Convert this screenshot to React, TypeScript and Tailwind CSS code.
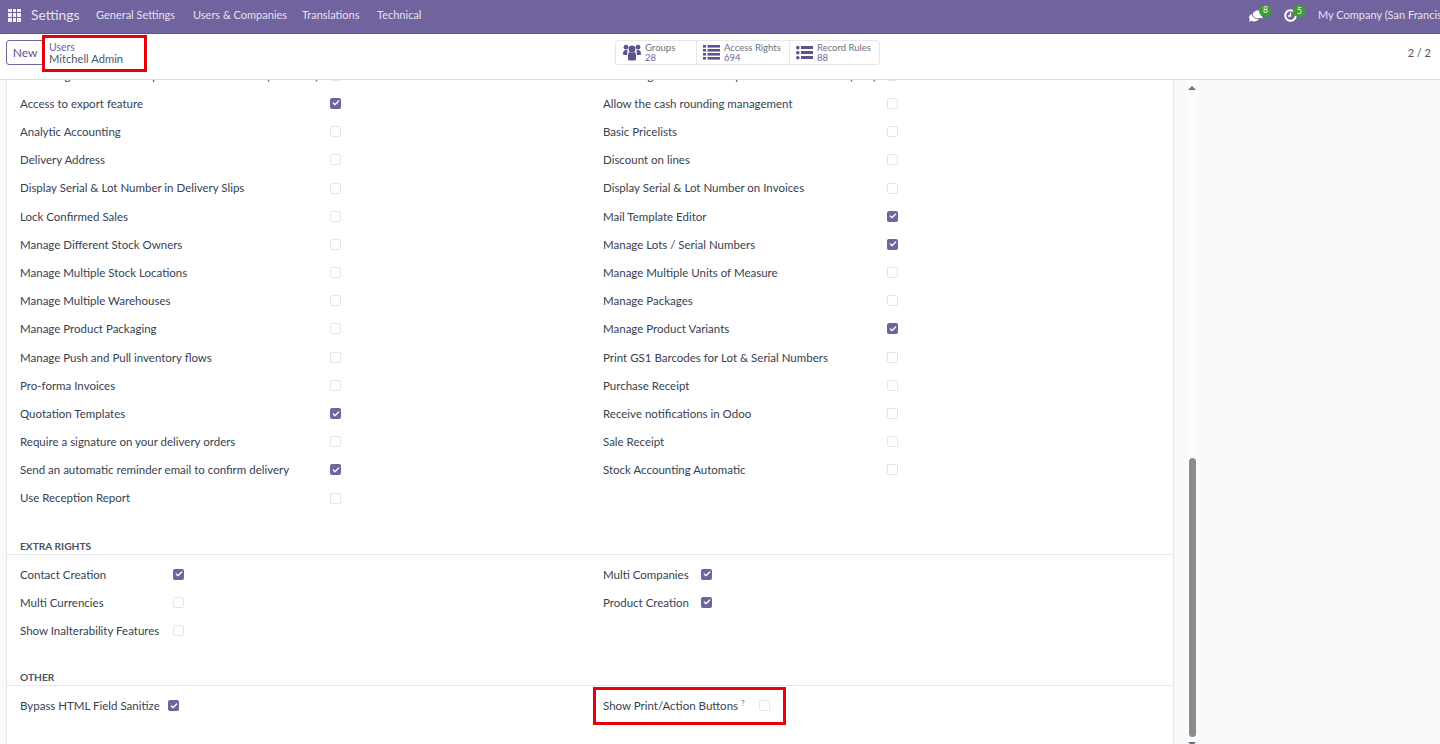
import React from "react";
import { Check } from "lucide-react";
import { FaComments } from "react-icons/fa";

type R = [string, boolean];

const leftRows: R[] = [
  ["A warning can be set on a product or a customer (Purchase)", false],
  ["Access to export feature", true],
  ["Analytic Accounting", false],
  ["Delivery Address", false],
  ["Display Serial & Lot Number in Delivery Slips", false],
  ["Lock Confirmed Sales", false],
  ["Manage Different Stock Owners", false],
  ["Manage Multiple Stock Locations", false],
  ["Manage Multiple Warehouses", false],
  ["Manage Product Packaging", false],
  ["Manage Push and Pull inventory flows", false],
  ["Pro-forma Invoices", false],
  ["Quotation Templates", true],
  ["Require a signature on your delivery orders", false],
  ["Send an automatic reminder email to confirm delivery", true],
  ["Use Reception Report", false],
];
const rightRows: R[] = [
  ["A warning can be set on a product or a customer (Sale)", false],
  ["Allow the cash rounding management", false],
  ["Basic Pricelists", false],
  ["Discount on lines", false],
  ["Display Serial & Lot Number on Invoices", false],
  ["Mail Template Editor", true],
  ["Manage Lots / Serial Numbers", true],
  ["Manage Multiple Units of Measure", false],
  ["Manage Packages", false],
  ["Manage Product Variants", true],
  ["Print GS1 Barcodes for Lot & Serial Numbers", false],
  ["Purchase Receipt", false],
  ["Receive notifications in Odoo", false],
  ["Sale Receipt", false],
  ["Stock Accounting Automatic", false],
];

function Box({ on }: { on: boolean }) {
  return on ? (
    <span className="flex h-[11px] w-[11px] shrink-0 items-center justify-center rounded-[2px] bg-[#71639e]">
      <Check size={8} strokeWidth={4} color="#ffffff" />
    </span>
  ) : (
    <span className="h-[11px] w-[11px] shrink-0 rounded-[2px] border border-[#e3e5e8] bg-white" />
  );
}

function Row({ label, on, w, help }: { label: string; on: boolean; w: string; help?: boolean }) {
  return (
    <div className="flex h-[28.2px] items-center">
      <div className={`${w} shrink-0 whitespace-nowrap text-[#374151]`}>
        {label}
        {help && <sup className="ml-[3px] text-[8px] text-[#71639e]">?</sup>}
      </div>
      <Box on={on} />
    </div>
  );
}

function Column({ rows, w }: { rows: R[]; w: string }) {
  return (
    <div className="flex flex-col">
      {rows.map(([l, o]) => (
        <Row key={l} label={l} on={o} w={w} />
      ))}
    </div>
  );
}

function Heading({ children }: { children: React.ReactNode }) {
  return (
    <div className="border-b border-[#e5e7eb] pb-[1px] pl-[13px] text-[10.2px] font-bold uppercase leading-[14px] text-[#4b5563]">
      {children}
    </div>
  );
}

function Stat({ icon, label, value, w, gap }: { icon: React.ReactNode; label: string; value: string; w: string; gap: string }) {
  return (
    <div className={`${w} ${gap} flex h-full items-center border-r border-[#e5e7eb] last:border-r-0`}>
      {icon}
      <div className="mt-[1px] flex flex-col text-[9.500px] leading-[10px]">
        <span className="text-[#6b7280]">{label}</span>
        <span className="text-[#71639e]">{value}</span>
      </div>
    </div>
  );
}

const AccessIcon = () => (
  <svg width="17" height="15" viewBox="0 0 17 15" fill="#5f5290" className="shrink-0">
    {[0, 4, 8, 12].map((y) => (
      <g key={y}>
        <rect x="0" y={y} width="3" height="2.600" />
        <rect x="4.500" y={y} width="12.500" height="2.600" />
      </g>
    ))}
  </svg>
);

const RulesIcon = () => (
  <svg width="17" height="14" viewBox="0 0 17 14" fill="#5f5290" className="shrink-0">
    {[0, 5, 10].map((y) => (
      <g key={y}>
        <circle cx="1.800" cy={y + 1.700} r="1.800" />
        <rect x="5" y={y} width="12" height="3" />
      </g>
    ))}
  </svg>
);

const GroupIcon = () => (
  <svg width="18" height="17" viewBox="0 0 18 17" fill="#5f5290" className="shrink-0">
    <circle cx="3" cy="3.200" r="2.400" />
    <circle cx="15" cy="3.200" r="2.400" />
    <circle cx="9" cy="5" r="3.400" />
    <path d="M0 10c0-3 1.200-4 3-4 .8 0 1.200.2 1.600.6C4.400 8 4 9.400 4 11H1c-.6 0-1-.4-1-1zM18 10c0-3-1.200-4-3-4-.8 0-1.200.2-1.600.6.2 1.400.6 2.800.6 4.400h3c.6 0 1-.4 1-1z" />
    <path d="M5 11c0-2 1-3 2-3 .6.4 1.200.6 2 .6s1.400-.2 2-.6c1 0 2 1 2 3v4c0 1-.8 1.500-1.600 1.500H6.600C5.800 16.500 5 16 5 15z" />
  </svg>
);

const ClockIcon = () => (
  <svg width="13" height="13" viewBox="0 0 13 13" fill="none" stroke="#ffffff" strokeWidth="2">
    <circle cx="6.500" cy="6.500" r="5.300" />
    <path d="M6.500 3.500v3.500H4" strokeWidth="1.400" />
  </svg>
);

function AppsIcon() {
  return (
    <div className="grid h-[13px] w-[13px] grid-cols-3 gap-[1px]">
      {Array.from({ length: 9 }).map((_, i) => (
        <span key={i} className="bg-white/90" />
      ))}
    </div>
  );
}

function Badge({ n }: { n: string }) {
  return (
    <span className="absolute -right-[9px] -top-[4px] flex h-[12px] w-[13px] items-center justify-center rounded-full bg-[#3f9c35] text-[8.500px] text-white/90">
      {n}
    </span>
  );
}

export default function App() {
  return (
    <div className="relative flex h-[744px] w-[1440px] flex-col overflow-hidden bg-white font-['Lato',sans-serif] text-[11.500px]">
      <header className="flex h-[34px] shrink-0 items-center border-b border-[#5f5290] bg-[#71639e] pb-[3px] pl-[8px] text-[#e4e0ee]">
        <AppsIcon />
        <span className="ml-[10px] w-[48px] whitespace-nowrap text-[13.800px]">Settings</span>
        <nav className="ml-[17px] flex text-[11px]">
          <span className="w-[97px]">General Settings</span>
          <span className="w-[109px]">Users &amp; Companies</span>
          <span className="w-[75px]">Translations</span>
          <span>Technical</span>
        </nav>
        <div className="ml-auto flex items-center whitespace-nowrap text-[11px]">
          <span className="relative mr-[21px] mt-[1px] flex">
            <FaComments size={14} color="#ffffff" className="scale-x-[-1]" />
            <Badge n="8" />
          </span>
          <span className="relative mr-[21px] mt-[1px] flex">
            <ClockIcon />
            <Badge n="5" />
          </span>
          <span className="w-[122px] overflow-hidden">My Company (San Francisco)</span>
        </div>
      </header>

      <div className="z-10 flex h-[46px] shrink-0 items-start border-b border-[#d8dadd] bg-white pl-[6px] pr-[9px] pt-[6px]">
        <button className="h-[25px] w-[38px] rounded-[3px] border border-[#71639e] text-[12px] text-[#5f5290]">New</button>
        <div className="ml-[5px] mt-[1px] flex w-[101px] flex-col">
          <span className="text-[10.500px] leading-[12px] text-[#71639e]">Users</span>
          <span className="text-[11.200px] leading-[12px] text-[#4b5563]">Mitchell Admin</span>
        </div>
        <div className="ml-[465px] flex h-[25px] items-center rounded-[3px] border border-[#e5e7eb]">
          <Stat icon={<GroupIcon />} label="Groups" value="28" w="w-[81px]" gap="gap-[4px] pl-[7px]" />
          <Stat icon={<AccessIcon />} label="Access Rights" value="694" w="w-[93px]" gap="gap-[4px] pl-[6px]" />
          <Stat icon={<RulesIcon />} label="Record Rules" value="88" w="w-[89px]" gap="gap-[4px] pl-[6px]" />
        </div>
        <span className="ml-auto mt-[5px] text-[11px] text-[#4b5563]">2 / 2</span>
      </div>

      <main className="flex min-h-0 flex-1 bg-[#f9fafb]">
        <div className="ml-[6px] w-[1168px] shrink-0 overflow-hidden border-x border-[#e5e7eb] bg-white">
          <div className="-mt-[18.800px] grid grid-cols-[583px_1fr] pl-[13px]">
            <Column rows={leftRows} w="w-[310px]" />
            <Column rows={rightRows} w="w-[284px]" />
          </div>

          <div className="mt-[27px]">
            <Heading>Extra Rights</Heading>
            <div className="grid grid-cols-[583px_1fr] pl-[13px] pt-[5px]">
              <Column
                rows={[
                  ["Contact Creation", true],
                  ["Multi Currencies", false],
                  ["Show Inalterability Features", false],
                ]}
                w="w-[153px]"
              />
              <Column
                rows={[
                  ["Multi Companies", true],
                  ["Product Creation", true],
                ]}
                w="w-[98px]"
              />
            </div>
          </div>

          <div className="mt-[25px]">
            <Heading>Other</Heading>
            <div className="grid grid-cols-[583px_1fr] pl-[13px] pt-[6px]">
              <Row label="Bypass HTML Field Sanitize" on w="w-[148px]" />
              <Row label="Show Print/Action Buttons" on={false} w="w-[156px]" help />
            </div>
          </div>
        </div>

        <div className="relative ml-[13px] w-[10px] shrink-0 bg-[#fdfdfe]">
          <span className="absolute left-[1px] top-[6px] h-0 w-0 border-x-[4px] border-b-[4px] border-x-transparent border-b-[#6b7280]" />
          <span className="absolute left-[1.500px] top-[378px] h-[279px] w-[7px] rounded-full bg-[#8c8c8c]" />
          <span className="absolute left-[1px] top-[662px] h-0 w-0 border-x-[4px] border-t-[4px] border-x-transparent border-t-[#6b7280]" />
        </div>
      </main>

      <div className="absolute left-[42px] top-[35px] z-20 h-[37px] w-[105px] border-[3px] border-[#e8000b]" />
      <div className="absolute left-[593px] top-[687px] z-20 h-[38px] w-[193px] border-[3px] border-[#e8000b]" />
    </div>
  );
}
